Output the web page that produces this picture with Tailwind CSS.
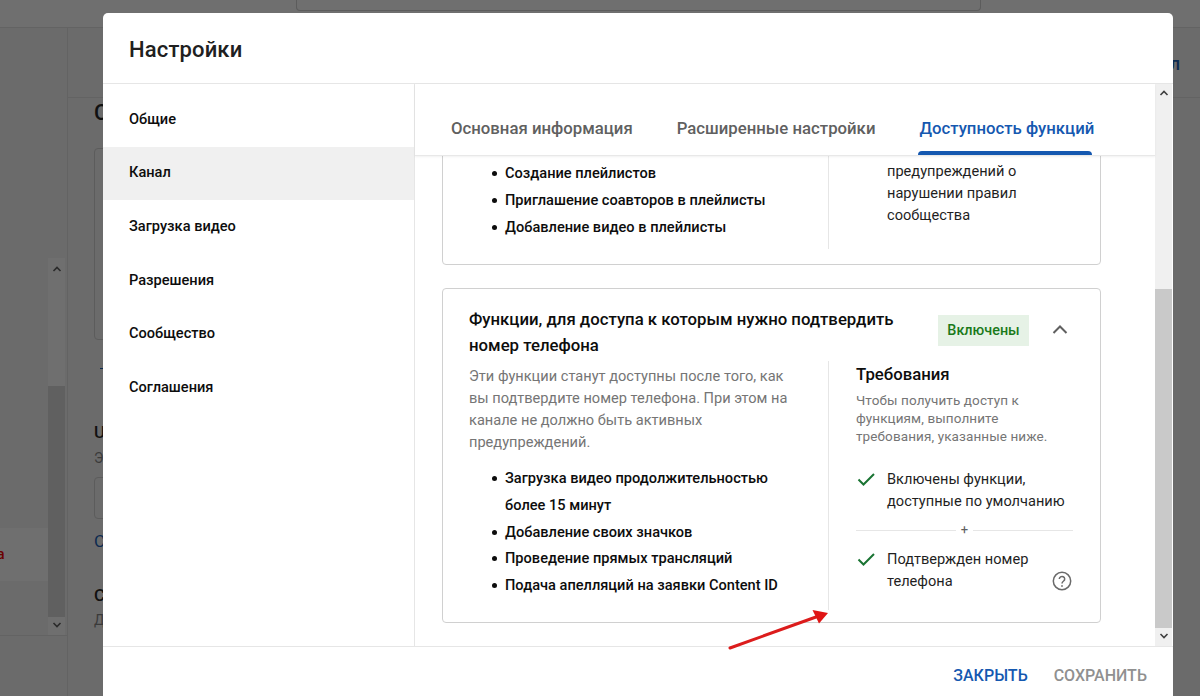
<!DOCTYPE html>
<html lang="ru">
<head>
<meta charset="utf-8">
<script src="https://cdn.jsdelivr.net/npm/@tailwindcss/browser@4"></script>
<title>Настройки</title>
</head>
<body class="relative h-[696px] w-[1200px] overflow-hidden bg-[#6b6b6b] font-['Roboto','Noto_Sans',sans-serif] text-[#0d0d0d]">
  <!-- Dimmed page behind the dialog -->
  <div class="flex h-full flex-col">
    <div class="h-[28px] shrink-0 border-b border-[#636363] bg-[#6f6f6f] pl-[296px]">
      <div class="h-[11px] w-[685px] rounded-b-[4px] border-x border-b border-[#5c5c5c]"></div>
    </div>
    <div class="flex min-h-0 flex-1">
      <aside class="flex w-[68px] shrink-0 flex-col border-r border-[#636363] pt-[230px]">
        <div class="flex h-[378px] border-b border-[#636363]">
          <div class="w-[48px] pt-[270px]">
            <div class="flex h-[53px] items-center overflow-hidden bg-[#6f6f6f] pl-0 text-[14px] font-medium text-[#6b0000]"><span class="-ml-[3px]">а</span></div>
          </div>
          <div class="flex w-[17px] flex-col items-center bg-[#6f6f6f]">
            <svg class="mt-[6px] h-[10px] w-[10px] shrink-0" viewBox="0 0 10 10" fill="none" stroke="#2b2b2b" stroke-width="1.6"><path d="M1.5 7 5 3.5 8.5 7"/></svg>
            <div class="mt-[112px] h-[231px] w-full shrink-0 bg-[#606060]"></div>
            <svg class="mt-[3px] h-[10px] w-[10px] shrink-0" viewBox="0 0 10 10" fill="none" stroke="#2b2b2b" stroke-width="1.6"><path d="M1.5 3 5 6.5 8.5 3"/></svg>
          </div>
        </div>
      </aside>
      <main class="min-w-0 flex-1">
        <div class="flex h-[70px] items-start justify-end border-b border-[#636363] pr-[20px] pt-[22px] text-[18px] font-medium text-[#0c2a50]">л</div>
        <div class="pl-[26px]">
          <div class="mt-[3px] text-[22px] leading-[24px] font-medium text-[#111]">С</div>
          <div class="mt-[23px] h-[192px] w-[60px] rounded-[4px] border border-[#5c5c5c]"></div>
          <div class="mt-[28px] h-[1px] w-[6px] bg-[#0c2a50] ml-[6px]"></div>
          <div class="mt-[53px] text-[17px] leading-[20px] font-medium text-[#111]">U</div>
          <div class="mt-[6px] text-[14px] leading-[20px] text-[#3a3a3a]">Э</div>
          <div class="mt-[9px] h-[42px] w-[60px] rounded-[4px] border border-[#5c5c5c]"></div>
          <div class="mt-[12px] text-[17px] leading-[20px] text-[#0c2a50]">С</div>
          <div class="mt-[34px] text-[17px] leading-[20px] font-medium text-[#111]">С</div>
          <div class="mt-[5px] text-[14px] leading-[20px] text-[#3a3a3a]">Д</div>
        </div>
      </main>
    </div>
  </div>

  <!-- Dialog -->
  <section class="absolute left-[103px] top-[13px] flex h-[700px] w-[1070px] flex-col overflow-hidden rounded-[5px] bg-white">
    <header class="flex h-[71px] shrink-0 items-center border-b border-[#e6e6e6] pl-[26px] pt-[4px]">
      <h1 class="text-[22px] leading-[28px] font-medium tracking-[0.15px] text-[#202020]">Настройки</h1>
    </header>

    <div class="flex h-[562px] shrink-0">
      <nav class="w-[312px] shrink-0 border-r border-[#e6e6e6] pt-[9px] text-[14.6px] font-medium text-[#0d0d0d]">
        <div class="flex h-[53.6px] items-center pl-[26px]">Общие</div>
        <div class="flex h-[53.6px] items-center bg-[#f0f0f0] pl-[26px]">Канал</div>
        <div class="flex h-[53.6px] items-center pl-[26px]">Загрузка видео</div>
        <div class="flex h-[53.6px] items-center pl-[26px]">Разрешения</div>
        <div class="flex h-[53.6px] items-center pl-[26px]">Сообщество</div>
        <div class="flex h-[53.6px] items-center pl-[26px]">Соглашения</div>
      </nav>

      <div class="flex min-w-0 flex-1">
        <div class="flex w-[740px] shrink-0 flex-col">
          <div class="z-10 flex h-[72px] shrink-0 items-stretch gap-[44px] border-b border-[#e8e8e8] bg-white pl-[36px] text-[16.75px] font-medium text-[#606060] shadow-[0_1px_2px_rgba(0,0,0,0.06)]">
            <div class="flex items-center pt-[19px]">Основная информация</div>
            <div class="flex items-center pt-[19px]">Расширенные настройки</div>
            <div class="relative flex items-center pt-[19px] text-[#1558b0]">
              Доступность функций
              <div class="absolute bottom-0 -left-px h-[4px] w-[174px] rounded-t-[4px] bg-[#1558b0]"></div>
            </div>
          </div>

          <div class="flex min-h-0 flex-1 flex-col justify-end gap-[23px] overflow-hidden pb-[23px] pl-[27px]">
            <!-- Card 1 -->
            <article class="flex h-[130px] w-[659px] shrink-0 flex-col justify-end overflow-hidden rounded-[4px] border border-[#d0d0d0] pb-[15px]">
              <div class="flex h-[93px] w-full shrink-0">
                <ul class="h-full w-[386px] shrink-0 border-r border-[#e6e6e6] pl-[62px] pt-[4px] text-[14.6px] leading-[27px] font-medium">
                  <li class="relative"><span class="absolute -left-[13px] top-[11px] h-[5px] w-[5px] rounded-full bg-[#0d0d0d]"></span>Создание плейлистов</li>
                  <li class="relative"><span class="absolute -left-[13px] top-[11px] h-[5px] w-[5px] rounded-full bg-[#0d0d0d]"></span>Приглашение соавторов в плейлисты</li>
                  <li class="relative"><span class="absolute -left-[13px] top-[11px] h-[5px] w-[5px] rounded-full bg-[#0d0d0d]"></span>Добавление видео в плейлисты</li>
                </ul>
                <p class="pl-[58px] pt-[4px] text-[14.6px] leading-[22px] text-[#1f1f1f]">предупреждений о<br>нарушении правил<br>сообщества</p>
              </div>
            </article>

            <!-- Card 2 -->
            <article class="h-[335px] w-[659px] shrink-0 rounded-[4px] border border-[#d0d0d0] pt-[17px]">
              <div class="flex h-[55px] items-start pl-[26px]">
                <h2 class="w-[469px] shrink-0 text-[16.75px] leading-[26px] font-medium text-[#0d0d0d]">Функции, для доступа к которым нужно подтвердить номер телефона</h2>
                <span class="mt-[9px] flex h-[31px] w-[91px] shrink-0 items-center justify-center bg-[#e6f2e6] text-[14.4px] font-medium text-[#1a7a1a]">Включены</span>
                <svg class="ml-[21px] mt-[14px] h-[20px] w-[20px] shrink-0" viewBox="0 0 20 20" fill="none" stroke="#606060" stroke-width="2"><path d="M3.5 13 10 6.5 16.5 13"/></svg>
              </div>
              <div class="flex">
                <div class="h-[249px] w-[386px] shrink-0 border-r border-[#e6e6e6] pl-[26px]">
                  <p class="w-[326px] pt-[3.5px] text-[14.6px] leading-[22.3px] text-[#757575]">Эти функции станут доступны после того, как вы подтвердите номер телефона. При этом на канале не должно быть активных предупреждений.</p>
                  <ul class="mt-[11.5px] pl-[36px] text-[14.6px] leading-[26.7px] font-medium">
                    <li class="relative"><span class="absolute -left-[13px] top-[11px] h-[5px] w-[5px] rounded-full bg-[#0d0d0d]"></span>Загрузка видео продолжительностью<br>более 15 минут</li>
                    <li class="relative"><span class="absolute -left-[13px] top-[11px] h-[5px] w-[5px] rounded-full bg-[#0d0d0d]"></span>Добавление своих значков</li>
                    <li class="relative"><span class="absolute -left-[13px] top-[11px] h-[5px] w-[5px] rounded-full bg-[#0d0d0d]"></span>Проведение прямых трансляций</li>
                    <li class="relative"><span class="absolute -left-[13px] top-[11px] h-[5px] w-[5px] rounded-full bg-[#0d0d0d]"></span>Подача апелляций на заявки Content ID</li>
                  </ul>
                </div>
                <div class="w-[245px] shrink-0 pl-[27px]">
                  <h3 class="text-[16.75px] leading-[26px] font-medium text-[#0d0d0d]">Требования</h3>
                  <p class="mt-[4px] w-[205px] text-[13.5px] leading-[18px] tracking-[0.1px] text-[#757575]">Чтобы получить доступ к функциям, выполните требования, указанные ниже.</p>
                  <div class="mt-[23px] flex gap-[10px] text-[14.6px] leading-[22px] text-[#1f1f1f]">
                    <svg class="mt-[1px] h-[21px] w-[21px] shrink-0" viewBox="0 0 21 21" fill="none" stroke="#1a7433" stroke-width="2"><path d="M2.5 10.5 7.5 15.5 18 5"/></svg>
                    <span class="w-[190px]">Включены функции, доступные по умолчанию</span>
                  </div>
                  <div class="mt-[11px] flex h-[14px] w-[217px] items-center gap-[5px] text-[13px] text-[#606060]">
                    <div class="h-[1px] flex-1 bg-[#e6e6e6]"></div>
                    <span class="leading-[14px]">+</span>
                    <div class="h-[1px] flex-1 bg-[#e6e6e6]"></div>
                  </div>
                  <div class="mt-[11px] flex w-[217px] gap-[10px] text-[14.6px] leading-[22px] text-[#1f1f1f]">
                    <svg class="mt-[1px] h-[21px] w-[21px] shrink-0" viewBox="0 0 21 21" fill="none" stroke="#1a7433" stroke-width="2"><path d="M2.5 10.5 7.5 15.5 18 5"/></svg>
                    <span class="w-[155px]">Подтвержден номер телефона</span>
                    <svg class="ml-auto mr-px mt-[23px] h-[20px] w-[20px] shrink-0" viewBox="0 0 20 20" fill="none" stroke="#6a6a6a" stroke-width="1.5"><circle cx="10" cy="10" r="8.7"/><path d="M7.3 8a2.7 2.5 0 1 1 4.3 2c-1 .7-1.6 1.2-1.6 2.5"/><path d="M10 14.2v1.5" stroke-width="1.7"/></svg>
                  </div>
                </div>
              </div>
            </article>
          </div>
        </div>

        <!-- Dialog scrollbar -->
        <div class="flex w-[17px] shrink-0 flex-col items-center bg-[#f0f0f0]">
          <svg class="mt-[4px] h-[10px] w-[10px] shrink-0" viewBox="0 0 10 10" fill="none" stroke="#404040" stroke-width="1.6"><path d="M1.5 7 5 3.5 8.5 7"/></svg>
          <div class="mt-[191px] h-[339px] w-full shrink-0 bg-[#c9c9c9]"></div>
          <svg class="mt-[3px] h-[10px] w-[10px] shrink-0" viewBox="0 0 10 10" fill="none" stroke="#404040" stroke-width="1.6"><path d="M1.5 3 5 6.5 8.5 3"/></svg>
        </div>
      </div>
    </div>

    <footer class="flex flex-1 items-start justify-end gap-[26px] border-t border-[#e6e6e6] pr-[26px] pt-[19px] text-[16px] leading-[20px] font-medium">
      <span class="text-[#1558b0]">ЗАКРЫТЬ</span>
      <span class="text-[#909090]">СОХРАНИТЬ</span>
    </footer>
  </section>

  <!-- Red annotation arrow -->
  <svg class="absolute left-[725px] top-[605px] h-[50px] w-[110px]" viewBox="0 0 110 50" fill="none">
    <path d="M5 43 91 12" stroke="#dc1c1c" stroke-width="3" stroke-linecap="round"/>
    <path d="M103 8 87.5 5 94 18.5Z" fill="#e01515"/>
  </svg>
</body>
</html>
